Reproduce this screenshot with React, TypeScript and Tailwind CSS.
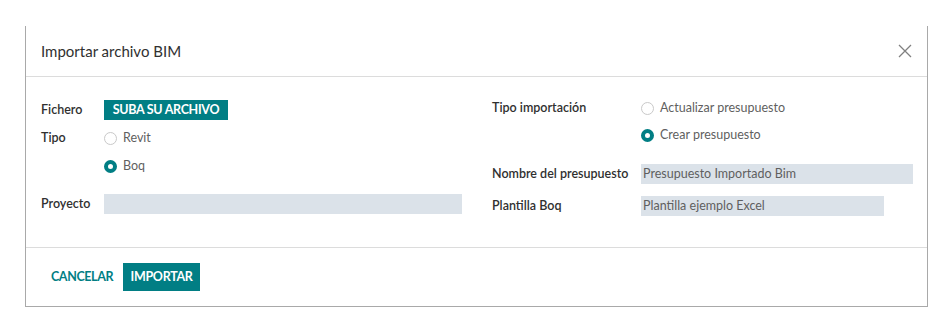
import React from "react";

function Radio({ checked, label }: { checked?: boolean; label: string }) {
  return (
    <div className="flex h-[20px] items-center gap-[6px]">
      {checked ? (
        <span className="box-border block h-[13px] w-[13px] rounded-full border-[4px] border-[#017e84] bg-white" />
      ) : (
        <span className="box-border block h-[13px] w-[13px] rounded-full border border-[#c9c9c9] bg-white" />
      )}
      <span className="text-[12.5px] text-[#5f5f5f]">{label}</span>
    </div>
  );
}

export default function App() {
  return (
    <div
      className="h-[327px] w-[944px] bg-white pl-[25px] pt-[26px]"
      style={{ fontFamily: 'Lato, "Open Sans", sans-serif' }}
    >
      <div className="box-border flex h-[281px] w-[903px] flex-col border-x border-b border-[#a9a9a9] bg-white">
        {/* Header */}
        <div className="flex h-[51px] items-center justify-between border-b border-[#dcdcdc] pl-[15px] pr-[14px]">
          <span className="text-[15px] text-[#303030]">Importar archivo BIM</span>
          <svg width="14" height="14" viewBox="0 0 14 14" className="mr-[1px]">
            <path d="M1 1 L13 13 M13 1 L1 13" stroke="#808080" strokeWidth="1.3" fill="none" />
          </svg>
        </div>

        {/* Body */}
        <div className="flex h-[171px] gap-[30px] border-b border-[#dcdcdc] pl-[15px] pt-[21px]">
          {/* Left column */}
          <div className="flex w-[421px] flex-col pt-[2px]">
            <div className="flex h-[20px] items-center">
              <span className="w-[63px] whitespace-nowrap text-[12.5px] font-semibold text-[#303030]">Fichero</span>
              <span className="flex h-[20px] w-[124px] items-center justify-center bg-[#017e84] text-[12.5px] font-bold tracking-[-0.3px] text-white">
                SUBA SU ARCHIVO
              </span>
            </div>
            <div className="mt-[8px] flex">
              <span className="flex h-[20px] w-[63px] items-center text-[12.5px] font-semibold text-[#303030]">Tipo</span>
              <div className="flex flex-col gap-[8px]">
                <Radio label="Revit" />
                <Radio checked label="Boq" />
              </div>
            </div>
            <div className="mt-[18px] flex h-[20px] items-center">
              <span className="w-[63px] text-[12.5px] font-semibold text-[#303030]">Proyecto</span>
              <span className="h-[20px] w-[358px] bg-[#dbe2e9]" />
            </div>
          </div>

          {/* Right column */}
          <div className="flex w-[421px] flex-col">
            <div className="flex">
              <span className="flex h-[20px] w-[149px] items-center whitespace-nowrap text-[12.5px] font-semibold text-[#303030]">
                Tipo importación
              </span>
              <div className="flex flex-col gap-[7px]">
                <Radio label="Actualizar presupuesto" />
                <Radio checked label="Crear presupuesto" />
              </div>
            </div>
            <div className="mt-[19px] flex h-[20px] items-center">
              <span className="w-[149px] whitespace-nowrap text-[12.5px] font-semibold text-[#303030]">Nombre del presupuesto</span>
              <span className="flex h-[20px] w-[272px] items-center bg-[#dbe2e9] pl-[2px] text-[12.5px] text-[#5f5f5f]">
                Presupuesto Importado Bim
              </span>
            </div>
            <div className="mt-[12px] flex h-[20px] items-center">
              <span className="w-[149px] whitespace-nowrap text-[12.5px] font-semibold text-[#303030]">Plantilla Boq</span>
              <span className="flex h-[20px] w-[243px] items-center bg-[#dbe2e9] pl-[2px] text-[12.5px] text-[#5f5f5f]">
                Plantilla ejemplo Excel
              </span>
            </div>
          </div>
        </div>

        {/* Footer */}
        <div className="flex flex-1 items-center gap-[10px] pl-[25px]">
          <span className="text-[12.5px] font-bold tracking-[-0.4px] text-[#017e84]">CANCELAR</span>
          <span className="flex h-[28px] w-[77px] items-center justify-center bg-[#017e84] text-[12.5px] font-bold tracking-[-0.3px] text-white">
            IMPORTAR
          </span>
        </div>
      </div>
    </div>
  );
}
